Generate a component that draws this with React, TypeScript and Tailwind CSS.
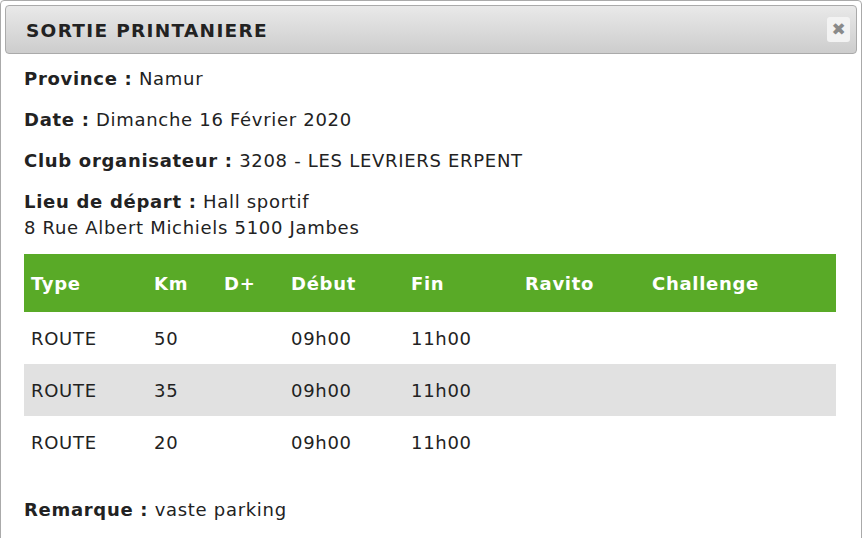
const rows = [
  { type: 'ROUTE', km: '50', dplus: '', debut: '09h00', fin: '11h00', ravito: '', challenge: '' },
  { type: 'ROUTE', km: '35', dplus: '', debut: '09h00', fin: '11h00', ravito: '', challenge: '' },
  { type: 'ROUTE', km: '20', dplus: '', debut: '09h00', fin: '11h00', ravito: '', challenge: '' },
];

const cols = 'grid grid-cols-[123px_70px_67px_120px_114px_127px_1fr]';

export default function App() {
  return (
    <div className="h-[538px] w-[862px] overflow-hidden bg-white font-['DejaVu_Sans',Verdana,sans-serif] text-[#222]">
      <div className="h-[560px] rounded-t-[4px] border border-[#aaaaaa] bg-white p-1">
        <div className="flex h-[49px] items-center justify-between rounded-[4px] border border-[#aaaaaa] bg-gradient-to-b from-[#e9e9e9] to-[#cdcdcd] pl-[20px] pr-[6px]">
          <span className="pt-[3px] text-[18.5px] font-bold tracking-[1.3px] text-[#222]">SORTIE PRINTANIERE</span>
          <button className="flex h-[25px] w-[23px] items-center justify-center rounded-[3px] bg-[#f3f3f3] text-[17px] font-bold leading-none text-[#8a8a8a]">
            ✖
          </button>
        </div>

        <div className="px-[19px] pt-[12px] text-[18px] tracking-[0.7px]">
          <p className="mb-[15px] leading-[26px]">
            <b>Province :</b> Namur
          </p>
          <p className="mb-[15px] leading-[26px]">
            <b>Date :</b> Dimanche 16 Février 2020
          </p>
          <p className="mb-[15px] leading-[26px]">
            <b>Club organisateur :</b> 3208 - LES LEVRIERS ERPENT
          </p>
          <p className="mb-[13px] leading-[26px]">
            <b>Lieu de départ :</b> Hall sportif
            <br />
            8 Rue Albert Michiels 5100 Jambes
          </p>

          <div className="w-[812px]">
            <div className={`${cols} h-[58px] items-center bg-[#59aa27] font-bold text-white`}>
              {['Type', 'Km', 'D+', 'Début', 'Fin', 'Ravito', 'Challenge'].map((h) => (
                <div key={h} className="px-[7px]">{h}</div>
              ))}
            </div>
            {rows.map((r, i) => (
              <div key={i} className={`${cols} h-[52px] items-center ${i % 2 === 1 ? 'bg-[#e1e1e1]' : 'bg-white'}`}>
                {[r.type, r.km, r.dplus, r.debut, r.fin, r.ravito, r.challenge].map((c, j) => (
                  <div key={j} className="px-[7px]">{c}</div>
                ))}
              </div>
            ))}
          </div>

          <p className="mt-[29px] leading-[26px]">
            <b>Remarque :</b> vaste parking
          </p>
        </div>
      </div>
    </div>
  );
}
